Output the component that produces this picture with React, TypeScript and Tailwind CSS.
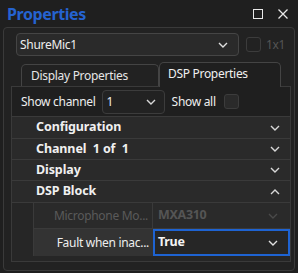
import React from 'react';

const Chevron = ({ up = false, className = '' }: { up?: boolean; className?: string }) => (
    <svg width="10" height="6" viewBox="0 0 10 6" className={className}>
        <path d={up ? 'M1 5L5 1L9 5' : 'M1 1L5 5L9 1'} fill="none" stroke="currentColor" strokeWidth="1.4" />
    </svg>
);

const GroupRow = ({ label, open = false, tall = false }: { label: string; open?: boolean; tall?: boolean }) => (
    <div className={`${tall ? 'h-[22px]' : 'h-[21px]'} flex items-center justify-between border-b border-[#3a3a3a] bg-[#2a2a2a] pl-[24px] pr-[10px]`}>
        <span className="text-[12.5px] font-bold tracking-[-0.1px] text-[#f0f0f0] whitespace-pre">{label}</span>
        <Chevron up={open} className="text-[#d8d8d8]" />
    </div>
);

export default function App() {
    return (
        <div className="w-[298px] h-[273px] bg-[#1f1f1f] overflow-hidden flex flex-col tracking-[-0.3px]" style={{ fontFamily: '"Noto Sans", "Open Sans", sans-serif' }}>
            {/* Title bar */}
            <div className="h-[27px] flex items-center justify-between pl-[7px] pr-[10px]">
                <span className="text-[16px] font-bold text-[#2563d0] leading-none tracking-[-0.4px]">Properties</span>
                <div className="flex items-center gap-[15px]">
                    <div className="w-[10px] h-[10px] border-[1.5px] border-[#e8e8e8]" />
                    <svg width="10" height="10" viewBox="0 0 10 10">
                        <path d="M0.5 0.5L9.5 9.5M9.5 0.5L0.5 9.5" stroke="#e8e8e8" strokeWidth="1.3" />
                    </svg>
                </div>
            </div>

            {/* Panel */}
            <div className="mx-[3px] h-[244px] border border-[#3a3a3a] rounded-[4px] bg-[#222222] flex flex-col">
                <div className="flex items-center pt-[5px] pl-[12px]">
                    <div className="w-[223px] h-[23px] border border-[#454545] rounded-[4px] bg-[#2a2a2a] flex items-center justify-between pl-[3px] pr-[10px]">
                        <span className="text-[12px] text-[#eeeeee]">ShureMic1</span>
                        <Chevron className="text-[#e0e0e0]" />
                    </div>
                    <div className="ml-[7px] w-[15px] h-[15px] border border-[#3c3c3c] rounded-[3px]" />
                    <span className="ml-[5px] text-[12px] text-[#555555]">1x1</span>
                </div>

                {/* Tabs */}
                <div className="flex items-end h-[24px] mt-[6px] pl-[17px]">
                    <div className="w-[138px] h-[22px] border border-b-0 border-[#444444] rounded-t-[5px] bg-[#222222] flex items-center pl-[9px]">
                        <span className="text-[12px] text-[#e6e6e6]">Display Properties</span>
                    </div>
                    <div className="w-[122px] h-[25px] -mb-px relative z-10 border border-b-0 border-[#444444] rounded-t-[5px] bg-[#1f1f1f] flex items-center pl-[8px] pb-[2px]">
                        <span className="text-[12px] text-[#f0f0f0]">DSP Properties</span>
                    </div>
                </div>

                {/* Tab pane */}
                <div className="ml-[7px] mr-[3px] h-[176px] border border-[#3a3a3a] bg-[#1f1f1f] flex flex-col">
                    <div className="flex items-center h-[28px] pt-[1px] pl-[9px]">
                        <span className="text-[12px] text-[#eeeeee]">Show channel</span>
                        <div className="ml-[6px] w-[63px] h-[24px] border border-[#3c3c3c] rounded-[4px] bg-[#222222] flex items-center justify-between pl-[4px] pr-[8px]">
                            <span className="text-[12px] text-[#eeeeee]">1</span>
                            <Chevron className="text-[#d8d8d8]" />
                        </div>
                        <span className="ml-[7px] text-[12px] text-[#eeeeee]">Show all</span>
                        <div className="ml-[8px] w-[15px] h-[15px] border border-[#3c3c3c] rounded-[3px] bg-[#2a2a2a]" />
                    </div>

                    {/* Property grid */}
                    <div className="mt-[1px] flex-1 border-t border-[#3a3a3a] bg-[#262626] flex flex-col">
                        <GroupRow label="Configuration" tall />
                        <GroupRow label="Channel  1 of  1" />
                        <GroupRow label="Display" />
                        <GroupRow label="DSP Block" open tall />
                        <div className="flex pl-[21px]">
                            <div className="flex-1 flex flex-col border-l border-[#3a3a3a]">
                                <div className="h-[26px] flex border-b border-[#3a3a3a] bg-[#2a2a2a]">
                                    <div className="w-[119px] flex items-center justify-end pr-[4px] border-r border-[#3a3a3a] overflow-hidden">
                                        <span className="text-[12px] text-[#5a5a5a] whitespace-nowrap">Microphone Mo...</span>
                                    </div>
                                    <div className="flex-1 flex items-center justify-between pl-[5px] pr-[12px]">
                                        <span className="text-[12.5px] font-bold text-[#555555]">MXA310</span>
                                        <Chevron className="text-[#4a4a4a]" />
                                    </div>
                                </div>
                                <div className="h-[27px] flex bg-[#333333]">
                                    <div className="w-[119px] flex items-center justify-end pr-[4px] overflow-hidden">
                                        <span className="text-[12px] text-[#eeeeee] whitespace-nowrap">Fault when inac...</span>
                                    </div>
                                    <div className="flex-1 flex items-center justify-between border-2 border-[#1e63d2] bg-[#262626] pl-[3px] pr-[10px]">
                                        <span className="text-[12.5px] font-bold text-[#f4f4f4]">True</span>
                                        <Chevron className="text-[#e0e0e0]" />
                                    </div>
                                </div>
                            </div>
                        </div>
                    </div>
                </div>
            </div>
        </div>
    );
}
